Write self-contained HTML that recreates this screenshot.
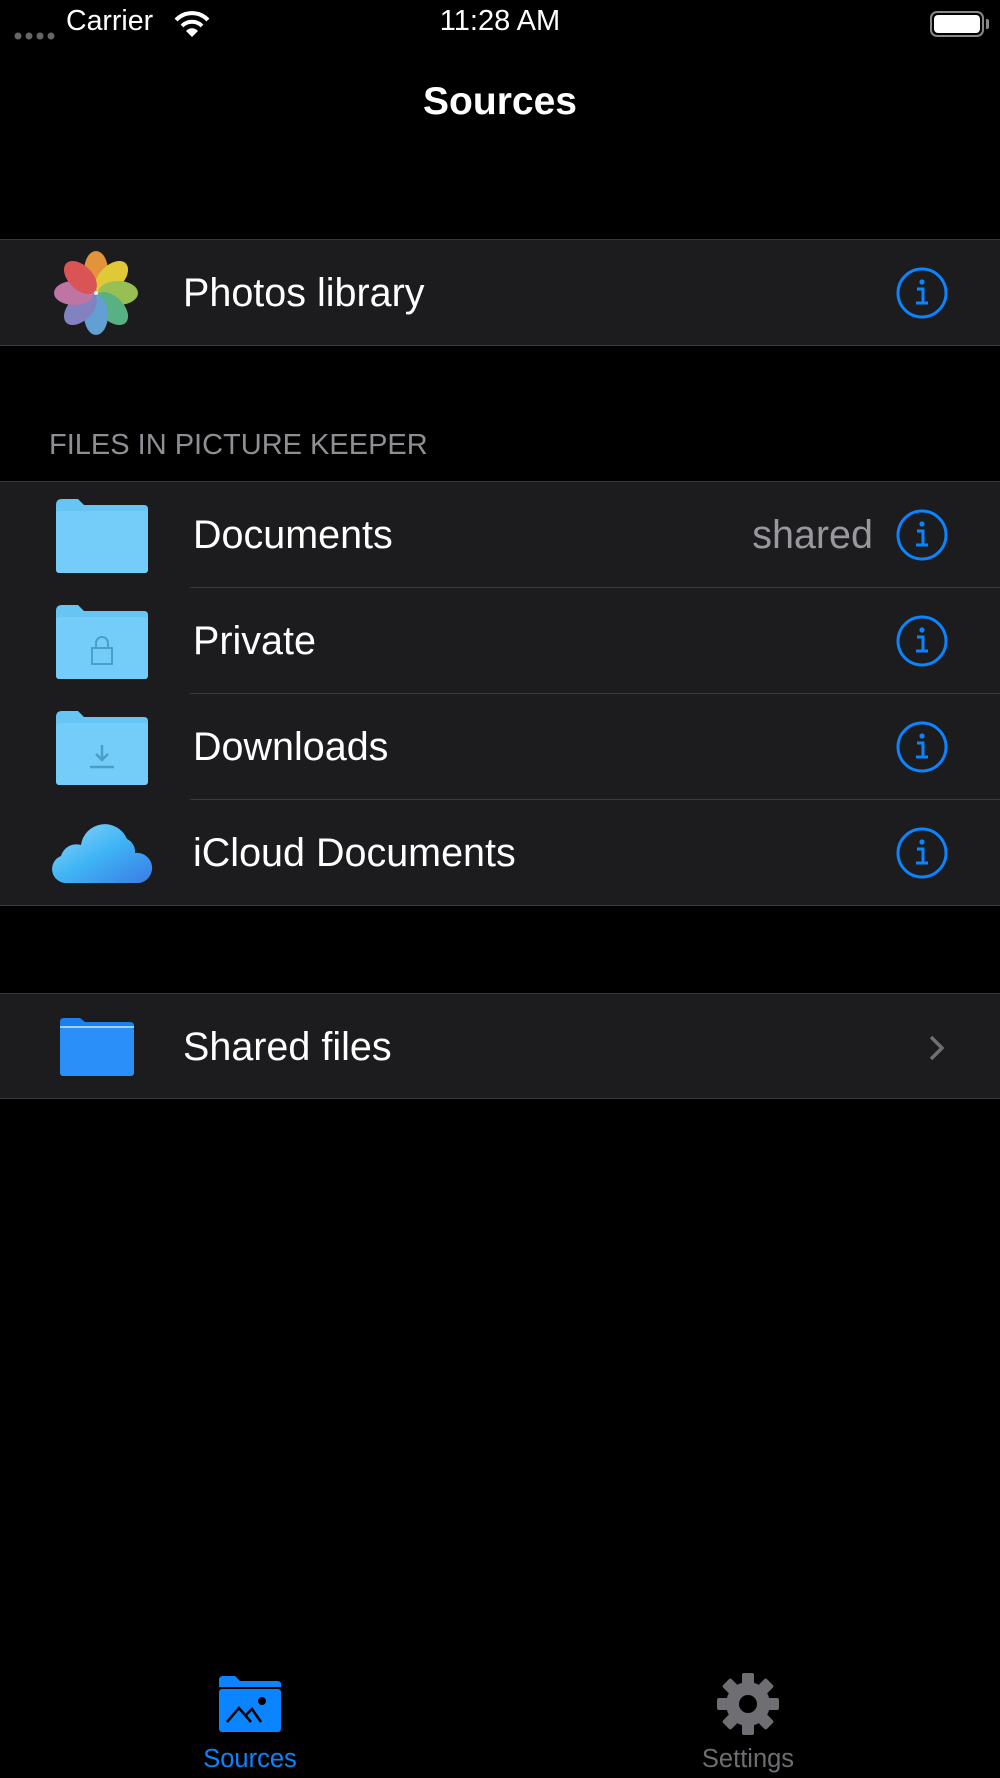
<!DOCTYPE html>
<html><head><meta charset="utf-8"><style>
*{margin:0;padding:0;box-sizing:border-box}
body{width:1000px;height:1778px;background:#000;font-family:"Liberation Sans",sans-serif;color:#fff;position:relative;overflow:hidden}
.abs{position:absolute}
.group{position:absolute;left:0;width:1000px;background:#1c1c1e;border-top:1px solid #3a3a3c;border-bottom:1px solid #3a3a3c}
.row{position:absolute;left:0;width:1000px;height:106px}
.lbl{position:absolute;font-size:39.5px;line-height:106px;top:0;color:#fff}
.sep{position:absolute;left:190px;right:0;bottom:0;height:1px;background:#3a3a3c}
.info{position:absolute;left:896px;top:27px;width:52px;height:52px}
</style></head><body>
<div class="abs" style="left:14px;top:28px">
<svg width="46" height="10"><circle cx="4" cy="5" r="3.5" fill="#666"/><circle cx="15" cy="5" r="3.5" fill="#666"/><circle cx="26" cy="5" r="3.5" fill="#666"/><circle cx="37" cy="5" r="3.5" fill="#666"/></svg></div>
<div class="abs" style="left:66px;top:5px;font-size:28.5px">Carrier</div>
<svg class="abs" style="left:174px;top:10px" width="36" height="28" viewBox="0 0 36 28"><path d="M2 10 A22 22 0 0 1 34 10" stroke="#fff" stroke-width="4" fill="none"/><path d="M8 16 A14 14 0 0 1 28 16" stroke="#fff" stroke-width="4" fill="none"/><path d="M18 27 L12 21 A8 8 0 0 1 24 21 Z" fill="#fff"/></svg>
<div class="abs" style="left:0;width:1000px;text-align:center;top:5px;font-size:29px">11:28 AM</div>
<div class="abs" style="left:930px;top:11px;width:54px;height:26px;border:2px solid #888;border-radius:7px"><div style="position:absolute;left:2px;top:2px;right:2px;bottom:2px;background:#fff;border-radius:4px"></div></div>
<div class="abs" style="left:986px;top:19px;width:3px;height:10px;background:#888;border-radius:0 2px 2px 0"></div>
<div class="abs" style="left:0;width:1000px;text-align:center;top:80px;font-size:39px;font-weight:bold">Sources</div>

<div class="group" style="top:239px;height:107px">
 <div class="row" style="top:0">
  <svg class="abs" style="left:53px;top:10px" width="86" height="86" viewBox="-43 -43 86 86">
   <g opacity="0.9">
   <ellipse cx="0" cy="-22" rx="12" ry="20" fill="#f9a03f" transform="rotate(0)"/>
   <ellipse cx="0" cy="-22" rx="12" ry="20" fill="#f5dc3a" transform="rotate(45)"/>
   <ellipse cx="0" cy="-22" rx="12" ry="20" fill="#a6d15a" transform="rotate(90)"/>
   <ellipse cx="0" cy="-22" rx="12" ry="20" fill="#5fc28d" transform="rotate(135)"/>
   <ellipse cx="0" cy="-22" rx="12" ry="20" fill="#6aaee6" transform="rotate(180)"/>
   <ellipse cx="0" cy="-22" rx="12" ry="20" fill="#8c8ed1" transform="rotate(225)"/>
   <ellipse cx="0" cy="-22" rx="12" ry="20" fill="#d07fb2" transform="rotate(270)"/>
   <ellipse cx="0" cy="-22" rx="12" ry="20" fill="#ef5b5b" transform="rotate(315)"/>
   </g><circle r="2" fill="#fff"/></svg>
  <div class="lbl" style="left:183px">Photos library</div>
  <svg class="info" viewBox="0 0 52 52"><circle cx="26" cy="26" r="24" stroke="#0a84ff" stroke-width="3" fill="none"/><circle cx="26" cy="15" r="2.6" fill="#0a84ff"/><path d="M21 22h6v14M20 36h12" stroke="#0a84ff" stroke-width="3" fill="none"/></svg>
 </div>
</div>

<div class="abs" style="left:49px;top:429px;font-size:29px;color:#8e8e93">FILES IN PICTURE KEEPER</div>

<div class="group" style="top:481px;height:425px">
 <div class="row" style="top:0">
  <svg class="abs" style="left:56px;top:17px" width="92" height="74" viewBox="0 0 92 74"><path d="M0 6 Q0 0 6 0 H22 L28 6 H88 Q92 6 92 10 V70 Q92 74 88 74 H4 Q0 74 0 70 Z" fill="#68c5f3"/><rect x="0" y="12" width="92" height="62" rx="3" fill="#74cdf8"/></svg>
  <div class="lbl" style="left:193px">Documents</div>
  <div class="lbl" style="left:650px;width:223px;text-align:right;color:#98989e">shared</div>
  <svg class="info" viewBox="0 0 52 52"><circle cx="26" cy="26" r="24" stroke="#0a84ff" stroke-width="3" fill="none"/><circle cx="26" cy="15" r="2.6" fill="#0a84ff"/><path d="M21 22h6v14M20 36h12" stroke="#0a84ff" stroke-width="3" fill="none"/></svg>
  <div class="sep"></div>
 </div>
 <div class="row" style="top:106px">
  <svg class="abs" style="left:56px;top:17px" width="92" height="74" viewBox="0 0 92 74"><path d="M0 6 Q0 0 6 0 H22 L28 6 H88 Q92 6 92 10 V70 Q92 74 88 74 H4 Q0 74 0 70 Z" fill="#68c5f3"/><rect x="0" y="12" width="92" height="62" rx="3" fill="#74cdf8"/><rect x="36" y="43" width="20" height="16" fill="none" stroke="#4a9ec8" stroke-width="2"/><path d="M40 43v-5a6 6 0 0 1 12 0v5" fill="none" stroke="#4a9ec8" stroke-width="2"/></svg>
  <div class="lbl" style="left:193px">Private</div>
  <svg class="info" viewBox="0 0 52 52"><circle cx="26" cy="26" r="24" stroke="#0a84ff" stroke-width="3" fill="none"/><circle cx="26" cy="15" r="2.6" fill="#0a84ff"/><path d="M21 22h6v14M20 36h12" stroke="#0a84ff" stroke-width="3" fill="none"/></svg>
  <div class="sep"></div>
 </div>
 <div class="row" style="top:212px">
  <svg class="abs" style="left:56px;top:17px" width="92" height="74" viewBox="0 0 92 74"><path d="M0 6 Q0 0 6 0 H22 L28 6 H88 Q92 6 92 10 V70 Q92 74 88 74 H4 Q0 74 0 70 Z" fill="#68c5f3"/><rect x="0" y="12" width="92" height="62" rx="3" fill="#74cdf8"/><path d="M46 34v14M40 43l6 6 6-6M34 56h24" stroke="#4a9ec8" stroke-width="2.5" fill="none"/></svg>
  <div class="lbl" style="left:193px">Downloads</div>
  <svg class="info" viewBox="0 0 52 52"><circle cx="26" cy="26" r="24" stroke="#0a84ff" stroke-width="3" fill="none"/><circle cx="26" cy="15" r="2.6" fill="#0a84ff"/><path d="M21 22h6v14M20 36h12" stroke="#0a84ff" stroke-width="3" fill="none"/></svg>
  <div class="sep"></div>
 </div>
 <div class="row" style="top:318px">
  <svg class="abs" style="left:51px;top:19px" width="102" height="64" viewBox="0 0 102 64"><defs><linearGradient id="cg" x1="0" y1="0" x2="1" y2="1"><stop offset="0" stop-color="#8fd8f8"/><stop offset="0.5" stop-color="#3fb4f5"/><stop offset="1" stop-color="#3a7be6"/></linearGradient></defs><path d="M14 64 A14 14 0 0 1 10 37 A16 16 0 0 1 30 26 A24 24 0 0 1 76 20 A14 14 0 0 1 84 34 A15 15 0 0 1 88 64 Z" fill="url(#cg)"/></svg>
  <div class="lbl" style="left:193px">iCloud Documents</div>
  <svg class="info" viewBox="0 0 52 52"><circle cx="26" cy="26" r="24" stroke="#0a84ff" stroke-width="3" fill="none"/><circle cx="26" cy="15" r="2.6" fill="#0a84ff"/><path d="M21 22h6v14M20 36h12" stroke="#0a84ff" stroke-width="3" fill="none"/></svg>
 </div>
</div>

<div class="group" style="top:993px;height:106px">
 <div class="row" style="top:0">
  <svg class="abs" style="left:60px;top:24px" width="74" height="58" viewBox="0 0 74 58"><path d="M0 4 Q0 0 4 0 H20 L25 4 H70 Q74 4 74 8 V54 Q74 58 70 58 H4 Q0 58 0 54 Z" fill="#1a7ff0"/><rect x="0" y="10" width="74" height="48" rx="3" fill="#2a8ff8"/><rect x="0" y="8" width="74" height="2" fill="#9fd0ff"/></svg>
  <div class="lbl" style="left:183px">Shared files</div>
  <svg class="abs" style="left:928px;top:40px" width="18" height="28" viewBox="0 0 18 28"><path d="M3 3l11 11-11 11" stroke="#6e6e73" stroke-width="3.5" fill="none"/></svg>
 </div>
</div>

<svg class="abs" style="left:219px;top:1676px" width="62" height="56" viewBox="0 0 62 56"><path d="M0 4 Q0 0 4 0 H16 L21 5 H58 Q62 5 62 8 V11 H0 Z" fill="#0a84ff"/><rect x="0" y="13" width="62" height="43" rx="3" fill="#0a84ff"/><path d="M8 46 L20 32 L32 46 M26 40 L33 33 L42 46" stroke="#000" stroke-width="2.5" fill="none"/><circle cx="43" cy="25" r="4" fill="#000"/></svg>
<div class="abs" style="left:150px;width:200px;text-align:center;top:1745px;font-size:25.5px;color:#0a84ff">Sources</div>
<svg class="abs" style="left:717px;top:1673px" width="62" height="62" viewBox="-31 -31 62 62"><g fill="#6e6e73"><circle r="22"/><rect x="-6" y="-31" width="12" height="14" rx="2"/><rect x="-6" y="-31" width="12" height="14" rx="2" transform="rotate(45)"/><rect x="-6" y="-31" width="12" height="14" rx="2" transform="rotate(90)"/><rect x="-6" y="-31" width="12" height="14" rx="2" transform="rotate(135)"/><rect x="-6" y="-31" width="12" height="14" rx="2" transform="rotate(180)"/><rect x="-6" y="-31" width="12" height="14" rx="2" transform="rotate(225)"/><rect x="-6" y="-31" width="12" height="14" rx="2" transform="rotate(270)"/><rect x="-6" y="-31" width="12" height="14" rx="2" transform="rotate(315)"/></g><circle r="9" fill="#000"/></svg>
<div class="abs" style="left:648px;width:200px;text-align:center;top:1745px;font-size:25.5px;color:#6e6e73">Settings</div>
</body></html>
